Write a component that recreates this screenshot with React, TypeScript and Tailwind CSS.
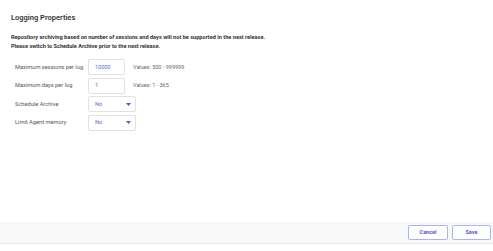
import React from "react";

export default function App() {
  return (
    <div className="w-[493px] h-[251px] bg-white flex flex-col font-['Roboto',sans-serif] overflow-hidden">
      <div className="flex-1 pl-[11px]">
        <div className="mt-[12px] h-[11px] text-[7.5px] leading-[11px] font-semibold text-[#333]">Logging Properties</div>
        <div className="mt-[10px] text-[5.6px] leading-[9px] font-bold text-[#333]">
          <div>Repository archiving based on number of sessions and days will not be supported in the next release.</div>
          <div>Please switch to Schedule Archive prior to the next release.</div>
        </div>
        <div className="mt-[8px] pl-[4px] flex flex-col gap-[2.5px]">
          <div className="flex items-center h-[16px]">
            <div className="w-[73px] text-[5.7px] text-[#555]">Maximum sessions per log</div>
            <div className="w-[37px] h-[16px] border border-[#e2e2e2] rounded-[2px] flex items-center pl-[6px] text-[5.5px] text-[#5865d8]">10000</div>
            <div className="ml-[8px] text-[5.5px] text-[#666]">Values: 500 - 999999</div>
          </div>
          <div className="flex items-center h-[16px]">
            <div className="w-[73px] text-[5.7px] text-[#555]">Maximum days per log</div>
            <div className="w-[37px] h-[16px] border border-[#e2e2e2] rounded-[2px] flex items-center pl-[6px] text-[5.5px] text-[#5865d8]">1</div>
            <div className="ml-[8px] text-[5.5px] text-[#666]">Values: 1 - 365</div>
          </div>
          <div className="flex items-center h-[16px]">
            <div className="w-[73px] text-[5.7px] text-[#555]">Schedule Archive</div>
            <div className="w-[48px] h-[16px] border border-[#e2e2e2] rounded-[2px] flex items-center justify-between pl-[6px] pr-[4px] text-[5.5px] text-[#5865d8]">
              <span>No</span>
              <svg width="5" height="3" viewBox="0 0 5 3"><path d="M0 0H5L2.5 3Z" fill="#4a5bd0" /></svg>
            </div>
          </div>
          <div className="flex items-center h-[16px]">
            <div className="w-[73px] text-[5.7px] text-[#555]">Limit Agent memory</div>
            <div className="w-[48px] h-[16px] border border-[#e2e2e2] rounded-[2px] flex items-center justify-between pl-[6px] pr-[4px] text-[5.5px] text-[#5865d8]">
              <span>No</span>
              <svg width="5" height="3" viewBox="0 0 5 3"><path d="M0 0H5L2.5 3Z" fill="#4a5bd0" /></svg>
            </div>
          </div>
        </div>
      </div>
      <div className="h-[22px] bg-[#f8f8f8] border-b border-[#e8e8e8] flex items-center justify-end gap-[4px] pr-[2px]">
        <button className="w-[40px] h-[15px] bg-white border border-[#aab4f5] rounded-[2px] text-[5.5px] font-bold text-[#4a5bd0]">Cancel</button>
        <button className="w-[39px] h-[15px] bg-white border border-[#aab4f5] rounded-[2px] text-[5.5px] font-bold text-[#4a5bd0]">Save</button>
      </div>
      <div className="h-[7px]" />
    </div>
  );
}
